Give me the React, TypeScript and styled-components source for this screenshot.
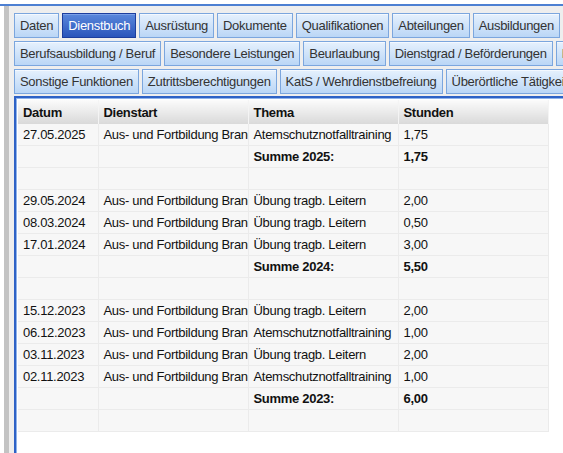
import React from "react";
import styled, { createGlobalStyle } from "styled-components";

const GlobalStyle = createGlobalStyle`
  html, body {
    margin: 0;
    padding: 0;
    background: #ffffff;
    font-family: "Liberation Sans", Arial, sans-serif;
    font-size: 13px;
    overflow: hidden;
  }
`;

type Row = {
  datum?: string;
  dienstart?: string;
  thema?: string;
  stunden?: string;
  sum?: boolean;
};

const tabRows: { label: string; active?: boolean }[][] = [
  [
    { label: "Daten" },
    { label: "Dienstbuch", active: true },
    { label: "Ausrüstung" },
    { label: "Dokumente" },
    { label: "Qualifikationen" },
    { label: "Abteilungen" },
    { label: "Ausbildungen" },
    { label: "Lehrgänge" },
  ],
  [
    { label: "Berufsausbildung / Beruf" },
    { label: "Besondere Leistungen" },
    { label: "Beurlaubung" },
    { label: "Dienstgrad / Beförderungen" },
    { label: "Ehrungen" },
  ],
  [
    { label: "Sonstige Funktionen" },
    { label: "Zutrittsberechtigungen" },
    { label: "KatS / Wehrdienstbefreiung" },
    { label: "Überörtliche Tätigkeiten" },
  ],
];

const ART = "Aus- und Fortbildung Brandschutz";

const rows: Row[] = [
  { datum: "27.05.2025", dienstart: ART, thema: "Atemschutznotfalltraining", stunden: "1,75" },
  { thema: "Summe 2025:", stunden: "1,75", sum: true },
  {},
  { datum: "29.05.2024", dienstart: ART, thema: "Übung tragb. Leitern", stunden: "2,00" },
  { datum: "08.03.2024", dienstart: ART, thema: "Übung tragb. Leitern", stunden: "0,50" },
  { datum: "17.01.2024", dienstart: ART, thema: "Übung tragb. Leitern", stunden: "3,00" },
  { thema: "Summe 2024:", stunden: "5,50", sum: true },
  {},
  { datum: "15.12.2023", dienstart: ART, thema: "Übung tragb. Leitern", stunden: "2,00" },
  { datum: "06.12.2023", dienstart: ART, thema: "Atemschutznotfalltraining", stunden: "1,00" },
  { datum: "03.11.2023", dienstart: ART, thema: "Übung tragb. Leitern", stunden: "2,00" },
  { datum: "02.11.2023", dienstart: ART, thema: "Atemschutznotfalltraining", stunden: "1,00" },
  { thema: "Summe 2023:", stunden: "6,00", sum: true },
  {},
];

const App = () => {
  return (
    <>
      <GlobalStyle />
      <Page>
        <TopStrip />
        <Body>
          <Gutter />
          <Main>
            <Tabs>
              {tabRows.map((r, i) => (
                <TabRow key={i}>
                  {r.map((t) => (
                    <Tab key={t.label} $active={t.active}>
                      {t.label}
                    </Tab>
                  ))}
                </TabRow>
              ))}
            </Tabs>
            <Panel>
              <Table>
                <colgroup>
                  <col style={{ width: 80 }} />
                  <col style={{ width: 150 }} />
                  <col style={{ width: 150 }} />
                  <col style={{ width: 150 }} />
                </colgroup>
                <thead>
                  <tr>
                    <Th>Datum</Th>
                    <Th>Dienstart</Th>
                    <Th>Thema</Th>
                    <Th>Stunden</Th>
                  </tr>
                </thead>
                <tbody>
                  {rows.map((r, i) => (
                    <tr key={i}>
                      <Td>{r.datum}</Td>
                      <Td>{r.dienstart}</Td>
                      <Td $bold={r.sum}>{r.thema}</Td>
                      <Td $bold={r.sum}>{r.stunden}</Td>
                    </tr>
                  ))}
                </tbody>
              </Table>
            </Panel>
          </Main>
        </Body>
      </Page>
    </>
  );
};

const Page = styled.div`
  width: 563px;
  height: 453px;
  display: flex;
  flex-direction: column;
  overflow: hidden;
`;

const TopStrip = styled.div`
  height: 4px;
  border-bottom: 2px solid #4d80d2;
  background: #ffffff;
  flex-shrink: 0;
`;

const Body = styled.div`
  flex: 1;
  display: flex;
  min-height: 0;
`;

const Gutter = styled.div`
  width: 5px;
  margin-left: 4px;
  background: #c3c3c3;
  flex-shrink: 0;
`;

const Main = styled.div`
  flex: 1;
  background: #eeeeee;
  padding: 7px 0 0 5px;
  display: flex;
  flex-direction: column;
  min-width: 0;
`;

const Tabs = styled.div`
  display: flex;
  flex-direction: column;
  gap: 3px;
`;

const TabRow = styled.div`
  display: flex;
  gap: 3px;
  overflow: hidden;
  white-space: nowrap;
`;

const Tab = styled.div<{ $active?: boolean }>`
  flex-shrink: 0;
  height: 23px;
  line-height: 23px;
  padding: 0 5px;
  border: 1px solid ${(p) => (p.$active ? "#1c3e9e" : "#7ba6de")};
  background: ${(p) =>
    p.$active
      ? "linear-gradient(#5a88dc, #2a55bb)"
      : "linear-gradient(#e6f1fd, #bad6f6)"};
  color: ${(p) => (p.$active ? "#ffffff" : "#333333")};
  font-size: 13px;
  letter-spacing: -0.3px;
  box-shadow: inset 0 1px 0 ${(p) => (p.$active ? "#7ba0e8" : "#f4f9ff")};
`;

const Panel = styled.div`
  flex: 1;
  margin-top: 2px;
  border-top: 2px solid #2e62c6;
  border-left: 2px solid #2e62c6;
  box-shadow: inset 1px 1px 0 #8fb3ea;
  background: #ffffff;
  padding: 2px 0 0 2px;
`;

const Table = styled.table`
  border-collapse: collapse;
  table-layout: fixed;
  width: 530px;
  letter-spacing: -0.3px;
`;

const Th = styled.th`
  height: 24px;
  padding: 0 5px;
  text-align: left;
  font-weight: bold;
  color: #111111;
  background: linear-gradient(#fbfbfb, #d9d9d9);
  border-right: 1px solid #f4f4f4;
  white-space: nowrap;
  overflow: hidden;
`;

const Td = styled.td<{ $bold?: boolean }>`
  height: 21px;
  padding: 0 0 0 5px;
  background: #f7f7f7;
  border-bottom: 1px solid #ebebeb;
  border-right: 1px solid #ebebeb;
  color: #111111;
  font-weight: ${(p) => (p.$bold ? "bold" : "normal")};
  white-space: nowrap;
  overflow: hidden;
  text-overflow: clip;
`;

export default App;
